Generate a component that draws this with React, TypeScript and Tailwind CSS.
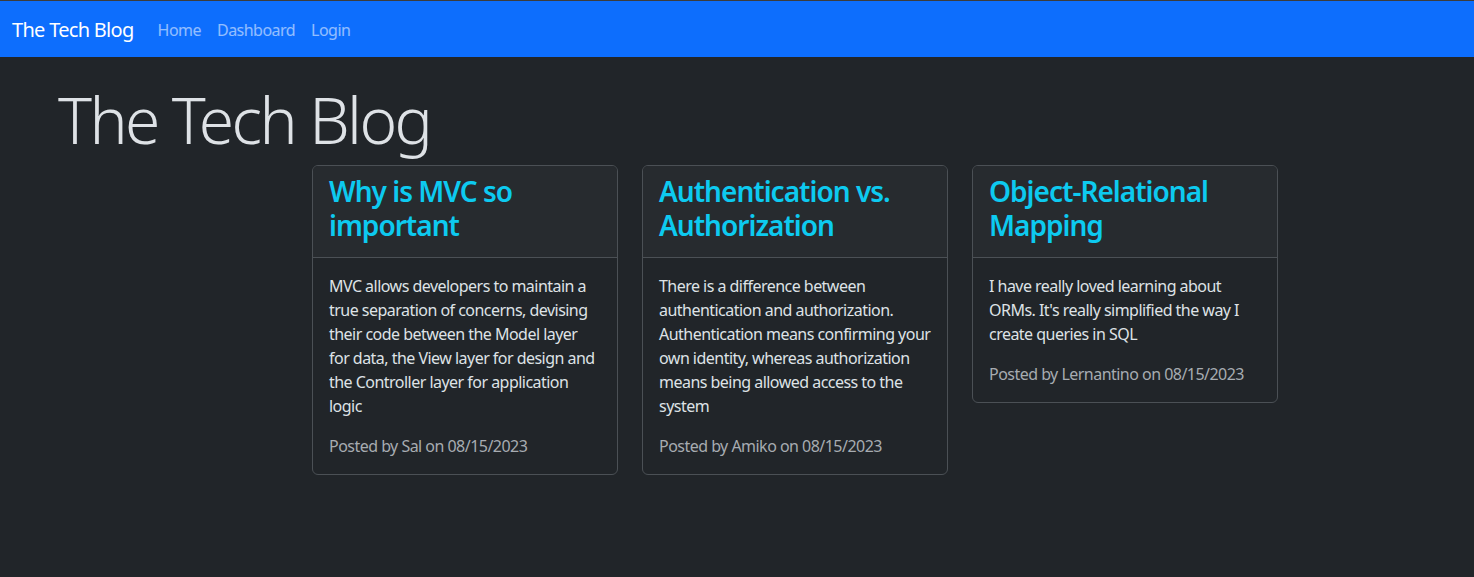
const posts = [
  {
    title: 'Why is MVC so important',
    body: 'MVC allows developers to maintain a true separation of concerns, devising their code between the Model layer for data, the View layer for design and the Controller layer for application logic',
    author: 'Sal',
    date: '08/15/2023',
  },
  {
    title: 'Authentication vs. Authorization',
    body: 'There is a difference between authentication and authorization. Authentication means confirming your own identity, whereas authorization means being allowed access to the system',
    author: 'Amiko',
    date: '08/15/2023',
  },
  {
    title: 'Object-Relational Mapping',
    body: "I have really loved learning about ORMs. It's really simplified the way I create queries in SQL",
    author: 'Lernantino',
    date: '08/15/2023',
  },
];

function Navbar() {
  return (
    <nav className="h-[57px] border-t border-[#3c3c3c] bg-[#0d6efd] flex items-center px-3 pt-[2px]">
      <a className="text-[20px] leading-[30px] tracking-[-0.035em] text-white mr-4">The Tech Blog</a>
      <div className="flex">
        <a className="px-2 text-white/55">Home</a>
        <a className="px-2 text-white/55">Dashboard</a>
        <a className="px-2 text-white/55">Login</a>
      </div>
    </nav>
  );
}

function PostCard({ post }: { post: (typeof posts)[number] }) {
  return (
    <div className="w-[306px] border border-[#4b5055] rounded-[6px] bg-[#212529] overflow-hidden">
      <div className="bg-[#272b2f] border-b border-[#4b5055] px-4 pt-[9px] pb-[15px]">
        <h3 className="text-[28px] leading-[33.6px] font-semibold tracking-[-0.035em] text-[#0dcaf0]">{post.title}</h3>
      </div>
      <div className="p-4">
        <p className="mb-4 text-[#dee2e6]">{post.body}</p>
        <p className="text-[#a7acb1]">
          Posted by {post.author} on {post.date}
        </p>
      </div>
    </div>
  );
}

export default function App() {
  return (
    <div
      className="min-h-screen bg-[#212529] text-[16px] leading-6 tracking-[-0.033em] text-[#dee2e6]"
      style={{ fontFamily: '"Noto Sans", "Open Sans", sans-serif' }}
    >
      <Navbar />
      <main>
        <h1 className="pl-[58px] pt-[24px] text-[64px] leading-[77px] font-light tracking-[-0.04em] text-[#dee2e6]">
          The Tech Blog
        </h1>
        <div className="flex items-start gap-6 pl-[312px] mt-[7px]">
          {posts.map((p) => (
            <PostCard key={p.title} post={p} />
          ))}
        </div>
      </main>
    </div>
  );
}
